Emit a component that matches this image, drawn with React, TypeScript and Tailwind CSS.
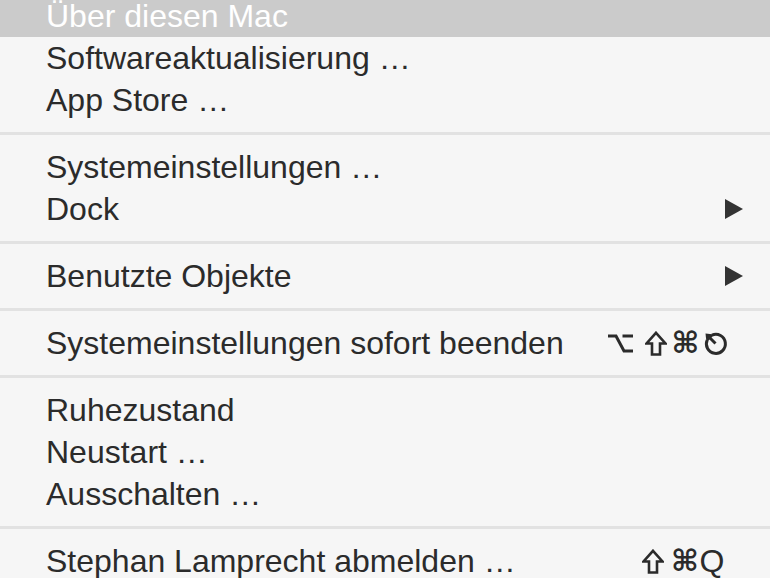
import { Fragment } from "react";

type Key = { k: string; w: number; ml: number };

type Item = {
	label: string;
	shortcut?: Key[];
	shortcutPad?: number;
	submenu?: boolean;
	active?: boolean;
};

const groups: Item[][] = [
	[
		{ label: "Über diesen Mac", active: true },
		{ label: "Softwareaktualisierung …" },
		{ label: "App Store …" },
	],
	[{ label: "Systemeinstellungen …" }, { label: "Dock", submenu: true }],
	[{ label: "Benutzte Objekte", submenu: true }],
	[
		{
			label: "Systemeinstellungen sofort beenden",
			shortcut: [
				{ k: "opt", w: 25, ml: 0 },
				{ k: "shift", w: 22, ml: 12 },
				{ k: "cmd", w: 23, ml: 7 },
				{ k: "esc", w: 25, ml: 6 },
			],
			shortcutPad: 14,
		},
	],
	[{ label: "Ruhezustand" }, { label: "Neustart …" }, { label: "Ausschalten …" }],
	[
		{
			label: "Stephan Lamprecht abmelden …",
			shortcut: [
				{ k: "shift", w: 22, ml: 0 },
				{ k: "cmd", w: 24, ml: 9 },
				{ k: "Q", w: 24, ml: 3 },
			],
			shortcutPad: 18,
		},
	],
];

function Glyph({ k }: { k: string }) {
	if (k === "shift")
		return (
			<svg width="22" height="25" viewBox="0 0 22 25">
				<path
					d="M11 1.8 L20.5 12.5 L15 12.5 L15 23.5 L7 23.5 L7 12.5 L1.5 12.5 Z"
					fill="none"
					stroke="#2b2b2b"
					strokeWidth="2.6"
					strokeLinejoin="miter"
				/>
			</svg>
		);
	if (k === "opt")
		return (
			<svg width="25" height="22" viewBox="0 0 25 22">
				<path
					d="M0 4 L8 4 L16 19 L25 19 M14.5 4 L25 4"
					fill="none"
					stroke="#2b2b2b"
					strokeWidth="3"
				/>
			</svg>
		);
	if (k === "esc")
		return (
			<svg width="25" height="25" viewBox="0 0 25 25">
				<path
					d="M9 4.2 A9.5 9.5 0 1 1 4.2 9"
					fill="none"
					stroke="#2b2b2b"
					strokeWidth="3"
				/>
				<path d="M2.5 2.5 L11.5 3.5 L3.5 11.5 Z" fill="#2b2b2b" />
				<path d="M4.5 4.5 L12.5 12.5" stroke="#2b2b2b" strokeWidth="3" />
			</svg>
		);
	if (k === "cmd")
		return (
			<span className="font-['DejaVu_Sans',sans-serif] text-[30px] font-bold leading-none">
				⌘
			</span>
		);
	return <span className="text-[32px] leading-none">{k}</span>;
}

function Row({ item, first }: { item: Item; first: boolean }) {
	return (
		<div
			className={`flex h-[42px] items-center pl-[46px] pr-[28px] ${
				first ? "mt-[-5px]" : ""
			} ${item.active ? "bg-[#cbcbcb] text-white" : "text-[#2b2b2b]"}`}
		>
			<span className="flex-1 whitespace-nowrap">{item.label}</span>
			{item.submenu && (
				<svg width="18" height="20" viewBox="0 0 18 20" className="mr-[-1px]">
					<path d="M0 0 L18 10 L0 20 Z" fill="#333" />
				</svg>
			)}
			{item.shortcut && (
				<span
					className="flex items-center"
					style={{ paddingRight: item.shortcutPad }}
				>
					{item.shortcut.map((key) => (
						<span
							key={key.k}
							className="flex items-center justify-center"
							style={{ width: key.w, marginLeft: key.ml }}
						>
							<Glyph k={key.k} />
						</span>
					))}
				</span>
			)}
		</div>
	);
}

export default function App() {
	return (
		<div className="h-[578px] w-[770px] overflow-hidden bg-[#f6f6f6] font-['Liberation_Sans',Arial,sans-serif] text-[32px]">
			{groups.map((group, gi) => (
				<Fragment key={gi}>
					{gi > 0 && (
						<div className="h-[25px] pt-[11px]">
							<div className="h-[3px] bg-[#e2e2e2]" />
						</div>
					)}
					{group.map((item, ii) => (
						<Row key={item.label} item={item} first={gi === 0 && ii === 0} />
					))}
				</Fragment>
			))}
		</div>
	);
}
